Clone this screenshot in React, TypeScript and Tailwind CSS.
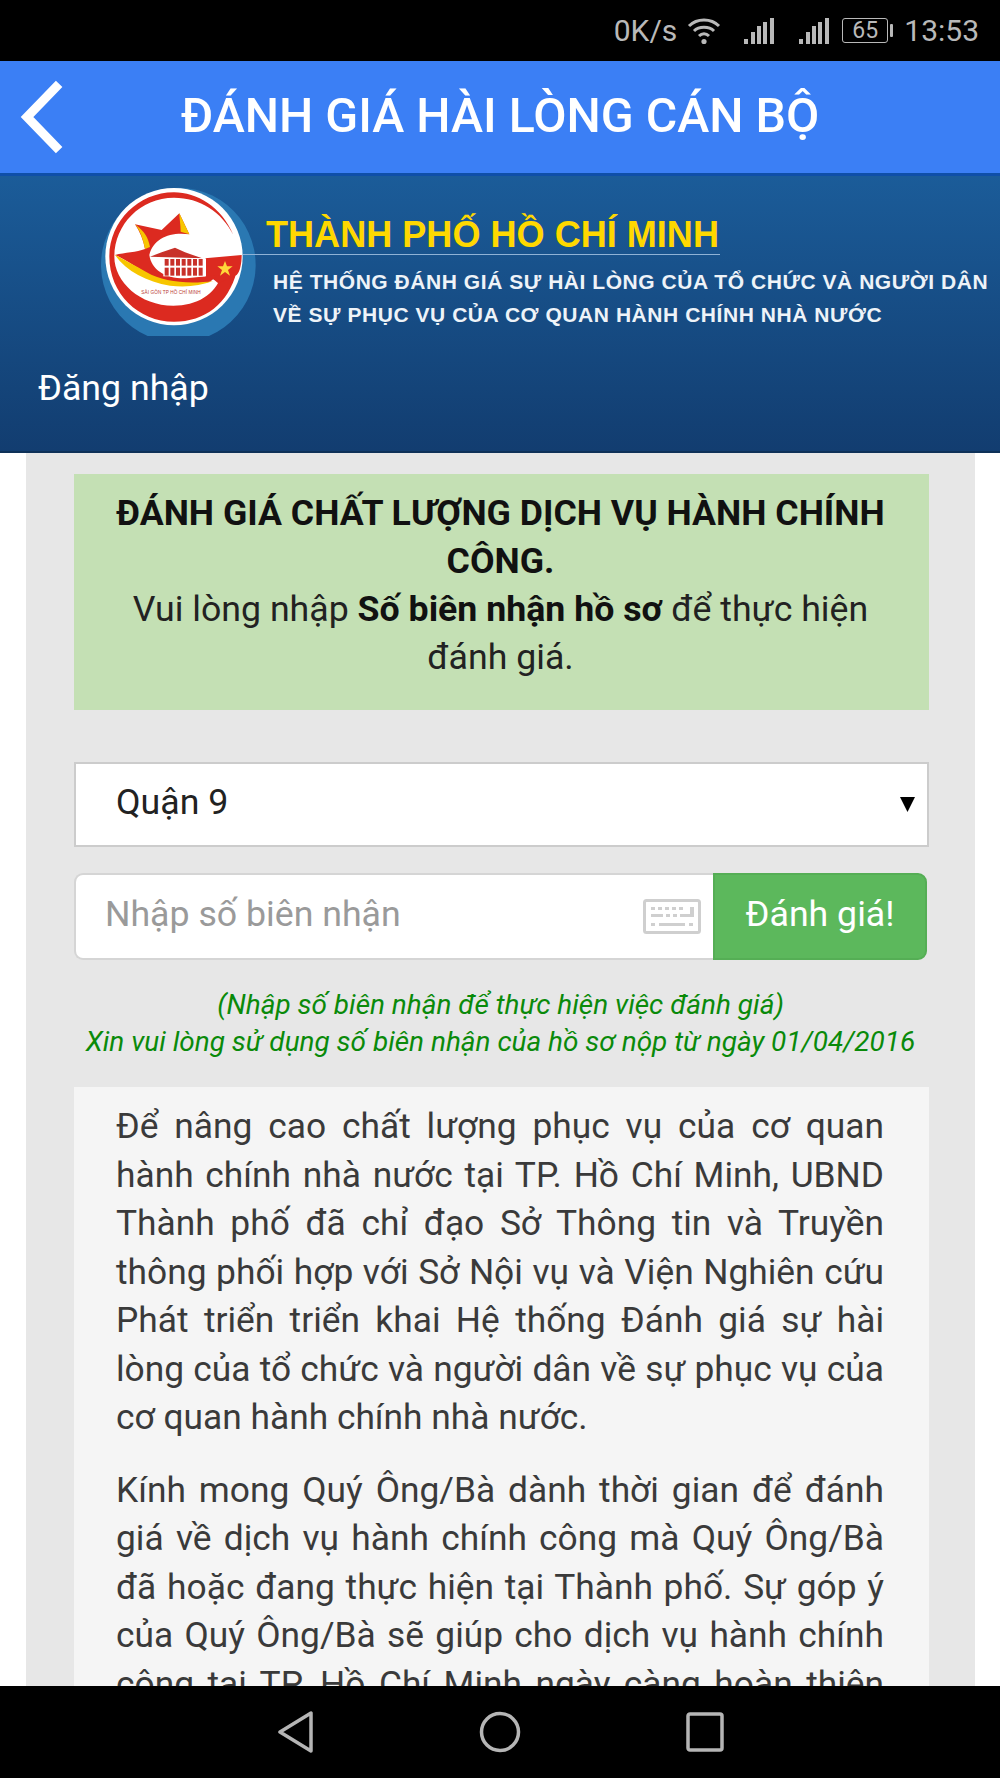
export default function App() {
  return (
    <div className="flex h-[1778px] w-[1000px] flex-col overflow-hidden bg-white font-['Roboto',sans-serif]">
      <StatusBar />
      <header className="flex h-[115px] shrink-0 items-center border-b-[3px] border-[#0f4fa8] bg-[#3b7ff5] pl-[20px]">
        <svg width="44" height="74" viewBox="0 0 44 74" className="shrink-0">
          <path d="M36 7 L7 37 L36 67" fill="none" stroke="#fff" strokeWidth="9" strokeLinecap="square" />
        </svg>
        <h1 className="mb-[1px] ml-[117px] whitespace-nowrap text-[48.3px] font-medium leading-none text-white">ĐÁNH GIÁ HÀI LÒNG CÁN BỘ</h1>
      </header>
      <section className="h-[277px] shrink-0 border-b-2 border-[#0e3158] bg-gradient-to-b from-[#1b5c99] to-[#123d70]">
        <div className="flex pl-[100px] pt-[11px]">
          <Logo />
          <div className="-ml-[13px] flex min-w-0 flex-col pt-[28px] font-['Liberation_Sans',sans-serif]">
            <div className="w-[477px] whitespace-nowrap border-b border-[#8fb2d6] pl-[23px] text-[36.1px] font-bold leading-[39px] text-[#ffd800]">THÀNH PHỐ HỒ CHÍ MINH</div>
            <div className="whitespace-nowrap pl-[30px] pt-[10px] text-[21px] font-bold leading-[33px] tracking-[0.55px] text-[#eef3f8]">HỆ THỐNG ĐÁNH GIÁ SỰ HÀI LÒNG CỦA TỔ CHỨC VÀ NGƯỜI DÂN</div>
            <div className="whitespace-nowrap pl-[30px] text-[21px] font-bold leading-[33px] tracking-[0.55px] text-[#eef3f8]">VỀ SỰ PHỤC VỤ CỦA CƠ QUAN HÀNH CHÍNH NHÀ NƯỚC</div>
          </div>
        </div>
        <div className="pl-[38px] pt-[28px] text-[35.7px] leading-[48px] text-white">Đăng nhập</div>
      </section>
      <main className="ml-[26px] mr-[25px] min-h-0 flex-1 overflow-hidden bg-[#e7e7e7] pl-[48px] pr-[46px] pt-[21px]">
        <div className="h-[236px] bg-[#c4e0b4] pl-[30px] pr-[32px] pt-[15px] text-center text-[35.7px] leading-[48px] text-[#222]">
          <b className="font-bold text-[#111]">ĐÁNH GIÁ CHẤT LƯỢNG DỊCH VỤ HÀNH CHÍNH CÔNG.</b>
          <br />
          Vui lòng nhập <b className="font-bold text-[#111]">Số biên nhận hồ sơ</b> để thực hiện đánh giá.
        </div>
        <div className="mt-[52px] flex h-[85px] items-center justify-between border-2 border-[#cccccc] bg-white pl-[40px] pr-[12px] text-[35.7px] text-[#222]">
          <span className="mb-[4px]">Quận 9</span>
          <svg width="15" height="15" viewBox="0 0 15 15"><path d="M0 0H15L7.5 15Z" fill="#000" /></svg>
        </div>
        <div className="mt-[26px] flex h-[87px] w-[853px]">
          <div className="flex flex-1 items-center justify-between rounded-l-[9px] border-2 border-r-0 border-[#d5d5d5] bg-white pl-[29px] pr-[12px] text-[35.7px] text-[#9a9a9a]">
            <span className="mb-[4px]">Nhập số biên nhận</span>
            <Keyboard />
          </div>
          <div className="flex w-[214px] items-center justify-center rounded-r-[9px] border-2 border-[#55ae55] bg-[#5cb85c] pb-[4px] text-[35.7px] text-white">Đánh giá!</div>
        </div>
        <div className="mt-[26px] pr-[2px] text-center text-[27.95px] italic leading-[37px] text-[#0a8a0a]">
          <div>(Nhập số biên nhận để thực hiện việc đánh giá)</div>
          <div className="whitespace-nowrap">Xin vui lòng sử dụng số biên nhận của hồ sơ nộp từ ngày 01/04/2016</div>
        </div>
        <div className="mt-[27px] bg-[#f5f5f5] pl-[42px] pr-[45px] pt-[15px] text-justify text-[35.35px] leading-[48.5px] text-[#3a3a3a]">
          <p>Để nâng cao chất lượng phục vụ của cơ quan hành chính nhà nước tại TP. Hồ Chí Minh, UBND Thành phố đã chỉ đạo Sở Thông tin và Truyền thông phối hợp với Sở Nội vụ và Viện Nghiên cứu Phát triển triển khai Hệ thống Đánh giá sự hài lòng của tổ chức và người dân về sự phục vụ của cơ quan hành chính nhà nước.</p>
          <p className="mt-[24px]">Kính mong Quý Ông/Bà dành thời gian để đánh giá về dịch vụ hành chính công mà Quý Ông/Bà đã hoặc đang thực hiện tại Thành phố. Sự góp ý của Quý Ông/Bà sẽ giúp cho dịch vụ hành chính công tại TP. Hồ Chí Minh ngày càng hoàn thiện hơn.</p>
        </div>
      </main>
      <NavBar />
    </div>
  );
}

function StatusBar() {
  return (
    <div className="flex h-[61px] shrink-0 items-center justify-end bg-black pr-[21px] text-[30px] leading-none text-[#b9b9b9]">
      <span>0K/s</span>
      <svg width="34" height="28" viewBox="0 0 34 28" className="ml-[10px]" fill="none" stroke="#b9b9b9" strokeWidth="3">
        <path d="M2 9 C10 1 24 1 32 9" />
        <path d="M7 14 C12 9 22 9 27 14" />
        <path d="M12 19 C15 16 19 16 22 19" />
        <circle cx="17" cy="24.5" r="2.6" fill="#b9b9b9" stroke="none" />
      </svg>
      <Signal className="ml-[23px]" />
      <Signal className="ml-[24px]" />
      <div className="ml-[12px] flex h-[25px] w-[46px] items-center justify-center rounded-[3px] border border-[#b9b9b9] text-[23px]">65</div>
      <div className="ml-[2px] h-[13px] w-[3px] rounded-[1px] bg-[#b9b9b9]" />
      <span className="ml-[11px]">13:53</span>
    </div>
  );
}

function Signal({ className }: { className: string }) {
  return (
    <svg width="31" height="28" viewBox="0 0 31 28" className={className} fill="#b9b9b9">
      <rect x="0" y="22" width="4" height="5" />
      <rect x="7" y="15" width="4" height="12" />
      <rect x="13" y="9" width="4" height="18" />
      <rect x="19" y="5" width="4" height="22" />
      <rect x="26" y="1" width="4" height="26" />
    </svg>
  );
}

function Logo() {
  const windows = [224, 241, 258, 275, 292, 309, 326];
  return (
    <svg width="156" height="149" viewBox="30 36 468 447" className="shrink-0">
      <path d="M173 483 A232 232 0 1 1 357 483 Z" fill="#2a78b2" />
      <circle cx="252" cy="245" r="206" fill="#fff" />
      <path d="M430 180 C395 95 320 52 252 52 C145 52 58 140 58 245 C58 355 145 440 252 440 C345 440 415 385 440 290 L395 300 C375 360 320 392 250 392 C150 392 73 320 73 245 C73 150 150 68 252 68 C330 68 395 110 430 180Z" fill="#dc2a20" />
      <path d="M345 250 L455 240 C455 265 450 290 440 300 L385 325 C375 315 360 305 345 305 Z" fill="#dc2a20" />
      <path d="M135 148 L215 165 L268 115 L298 178 C240 170 190 190 178 240 C185 285 225 312 290 310 L385 300 L360 320 C300 335 230 325 190 305 C150 285 110 255 75 240 C105 232 140 232 165 222 C160 195 150 170 135 148Z" fill="#dc2a20" />
      <path d="M75 240 C110 290 170 320 240 332 C290 338 330 332 370 318 C300 328 220 322 170 292 C135 272 100 252 75 240Z" fill="#f7c600" />
      <path d="M135 148 C150 165 160 195 165 222 L180 216 C175 190 165 170 135 148Z" fill="#f7c600" />
      <path d="M268 115 L298 178 L272 170 C272 150 268 130 268 115Z" fill="#f7c600" />
      <path d="M180 245 L215 232 L255 218 L285 232 L337 250 Z" fill="#c8312a" />
      <rect x="220" y="250" width="128" height="54" fill="#fff" />
      <g fill="#c8312a">
        {windows.map((x) => (
          <g key={x}>
            <rect x={x} y="252" width="12" height="20" />
            <rect x={x} y="278" width="12" height="24" />
          </g>
        ))}
      </g>
      <path d="M405 258 L411 274 L428 274 L414 285 L420 302 L405 291 L390 302 L396 285 L382 274 L399 274Z" fill="#ffd83a" />
      <text x="154" y="358" fontSize="14" fill="#b93b33" fontFamily="Liberation Sans, sans-serif" textLength="178">SÀI GÒN TP HỒ CHÍ MINH</text>
    </svg>
  );
}

function Keyboard() {
  return (
    <svg width="58" height="35" viewBox="0 0 58 35" fill="none">
      <rect x="1.5" y="1.5" width="55" height="32" rx="2" stroke="#cfcfcf" strokeWidth="3" />
      <g fill="#cfcfcf">
        <rect x="8" y="8" width="4" height="3" /><rect x="15" y="8" width="4" height="3" /><rect x="22" y="8" width="4" height="3" /><rect x="29" y="8" width="4" height="3" /><rect x="36" y="8" width="4" height="3" /><rect x="47" y="8" width="4" height="9" />
        <rect x="8" y="15" width="12" height="3" /><rect x="23" y="15" width="4" height="3" /><rect x="30" y="15" width="4" height="3" /><rect x="37" y="15" width="14" height="3" />
        <rect x="8" y="24" width="4" height="3" /><rect x="16" y="24" width="26" height="3" /><rect x="46" y="24" width="4" height="3" />
      </g>
    </svg>
  );
}

function NavBar() {
  return (
    <nav className="flex h-[92px] shrink-0 items-center bg-black pl-[277px]">
      <svg width="37" height="42" viewBox="0 0 37 42" fill="none" stroke="#b5b5b5" strokeWidth="3.5" strokeLinejoin="round">
        <path d="M34 2 V40 L3 21Z" />
      </svg>
      <svg width="42" height="42" viewBox="0 0 42 42" fill="none" stroke="#b5b5b5" strokeWidth="3.5" className="ml-[165px]">
        <circle cx="21" cy="21" r="18.5" />
      </svg>
      <svg width="38" height="40" viewBox="0 0 38 40" fill="none" stroke="#b5b5b5" strokeWidth="3.5" className="ml-[165px]">
        <rect x="2" y="2" width="34" height="36" rx="2" />
      </svg>
    </nav>
  );
}
